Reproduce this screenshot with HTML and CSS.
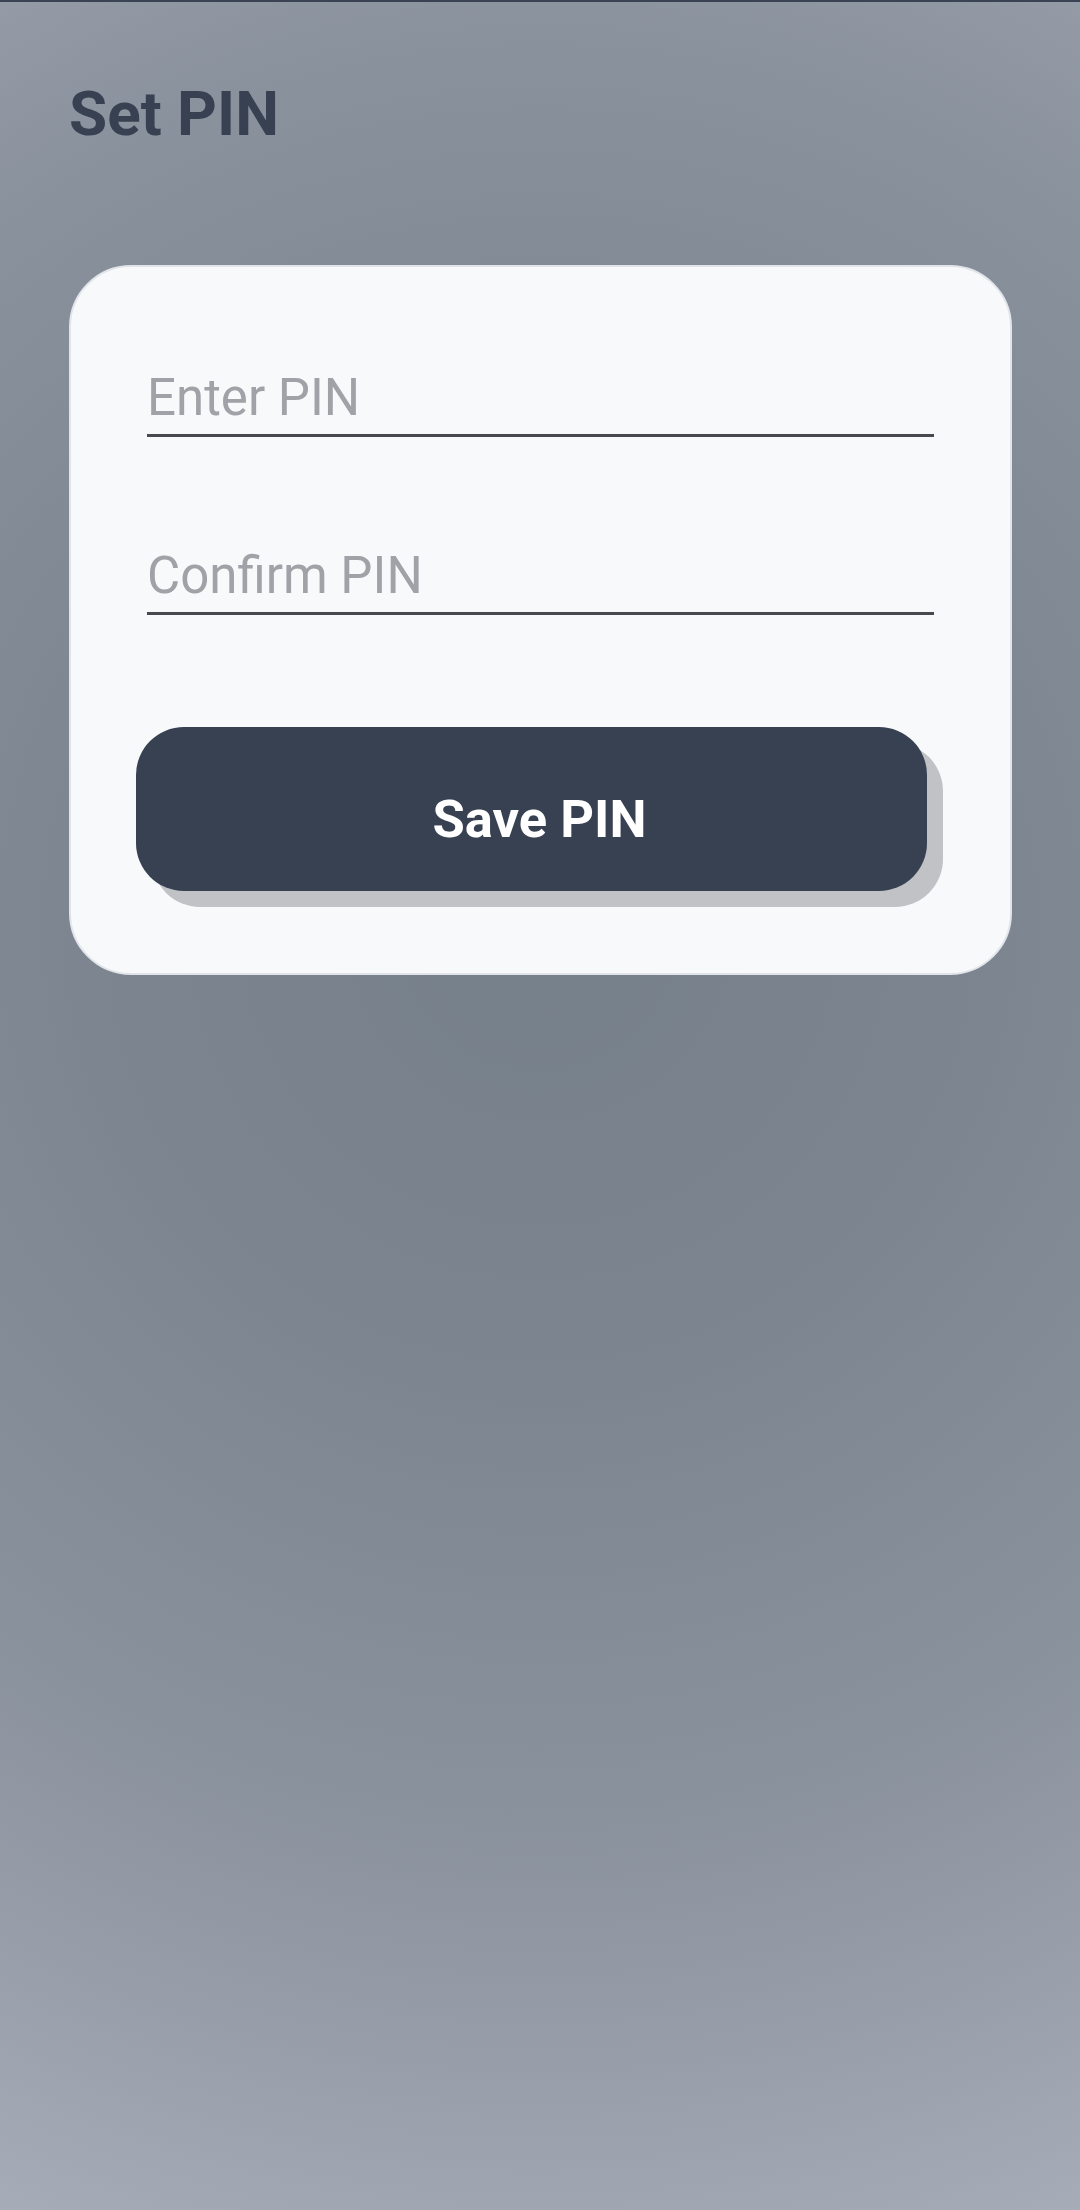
FILE: index.html
```html
<!DOCTYPE html>
<html lang="en">
<head>
<meta charset="utf-8">
<title>Set PIN</title>
<link rel="stylesheet" href="styles.css">
</head>
<body>
<div class="screen">
  <h1 class="title">Set PIN</h1>
  <form class="card">
    <label class="field">
      <input class="field-input" type="password" inputmode="numeric" placeholder="Enter PIN">
    </label>
    <label class="field field-second">
      <input class="field-input" type="password" inputmode="numeric" placeholder="Confirm PIN">
    </label>
    <button class="save-btn" type="button"><span class="save-label">Save PIN</span></button>
  </form>
</div>
</body>
</html>
```

FILE: styles.css
```css
html, body {
  margin: 0;
  padding: 0;
  height: 100%;
}

body {
  font-family: Roboto, "Noto Sans", "Liberation Sans", sans-serif;
  background: radial-gradient(circle at 50% 42%, #76808b 0px, #7b848f 420px, #8a929e 900px, #a6acb8 1400px);
  background-color: #8a929e;
}

.screen {
  box-sizing: border-box;
  min-height: 2210px;
  border-top: 2px solid #3a4353;
  padding: 75px 69px 0 69px;
}

.title {
  margin: 0;
  font-size: 62px;
  line-height: 1.2;
  font-weight: 700;
  color: #374151;
}

.card {
  margin-top: 114px;
  width: 943px;
  box-sizing: border-box;
  background: #f8f9fb;
  border: 2px solid #e1e5ea;
  border-radius: 62px;
  padding: 102px 76px 82px 76px;
  display: flex;
  flex-direction: column;
}

.field {
  display: block;
  border-bottom: 3px solid #48494e;
  padding-bottom: 7px;
}

.field-second {
  margin-top: 110px;
}

.field-input {
  display: block;
  width: 100%;
  border: 0;
  outline: 0;
  padding: 0;
  margin: 0;
  background: transparent;
  font-family: Roboto, "Noto Sans", "Liberation Sans", sans-serif;
  font-size: 51px;
  line-height: 58px;
  height: 58px;
  color: #1f2937;
}

.field-input::placeholder {
  color: #a1a2a7;
  opacity: 1;
}

.save-btn {
  margin-top: 112px;
  margin-left: -11px;
  width: 791px;
  height: 164px;
  border: 0;
  border-radius: 48px;
  background: #374151;
  box-shadow: 16px 16px 0 #c1c2c5;
  color: #ffffff;
  font-family: Roboto, "Noto Sans", "Liberation Sans", sans-serif;
  font-size: 52.5px;
  font-weight: 700;
  cursor: pointer;
  padding: 20px 0 0 16px;
}

.save-label {
  display: inline-block;
}
```
